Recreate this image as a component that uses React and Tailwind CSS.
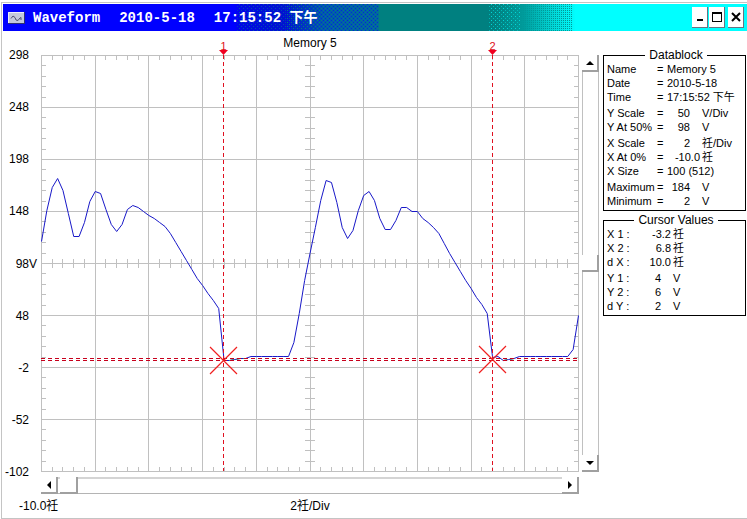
import React from 'react'
import clsx from 'clsx'

const PLOT_W = 538
const PLOT_H = 417
const COLS = 10
const ROWS = 8

const yLabels = ['298', '248', '198', '148', '98', '48', '-2', '-52', '-102']

// vertical trace position for each of the 101 samples
const samples = [
  186, 155, 132, 123, 135, 158, 181, 181, 167, 146, 136, 138, 154, 169, 176,
  169, 154, 150, 152, 156, 160, 163, 167, 171, 178, 187, 196, 205, 214, 223,
  230, 238, 245, 253, 305, 305, 304, 303, 303, 301, 301, 301, 301, 301, 301,
  301, 301, 287, 258, 225, 198, 172, 145, 125, 127, 147, 172, 183, 175, 155,
  140, 136, 145, 163, 174, 174, 165, 152, 152, 156, 156, 163, 167, 172, 178,
  188, 198, 207, 216, 225, 233, 242, 249, 258, 302, 301, 305, 304, 303, 301,
  301, 301, 301, 301, 301, 301, 301, 301, 301, 294, 260,
]

const datablock = [
  [
    { label: 'Name', text: 'Memory 5' },
    { label: 'Date', text: '2010-5-18' },
    { label: 'Time', text: '17:15:52 下午' },
  ],
  [
    { label: 'Y Scale', value: '50', unit: 'V/Div' },
    { label: 'Y At 50%', value: '98', unit: 'V' },
  ],
  [
    { label: 'X Scale', value: '2', unit: '祍/Div' },
    { label: 'X At 0%', value: '-10.0', unit: '祍' },
    { label: 'X Size', text: '100 (512)' },
  ],
  [
    { label: 'Maximum', value: '184', unit: 'V' },
    { label: 'Minimum', value: '2', unit: 'V' },
  ],
]

const cursorValues = [
  [
    { label: 'X 1 :', value: '-3.2', unit: '祍' },
    { label: 'X 2 :', value: '6.8', unit: '祍' },
    { label: 'd X :', value: '10.0', unit: '祍' },
  ],
  [
    { label: 'Y 1 :', value: '4', unit: 'V' },
    { label: 'Y 2 :', value: '6', unit: 'V' },
    { label: 'd Y :', value: '2', unit: 'V' },
  ],
]

const cursors = [
  { id: '1', x: 182, y: 305 },
  { id: '2', x: 451, y: 304 },
]

const range = n => Array.from({ length: n }, (_, i) => i)
const px = n => Math.round(n) + 0.5
const sampleX = i => (i * (PLOT_W - 1)) / 100 + 0.5
const trace = (from, to) =>
  samples
    .slice(from, to + 1)
    .map((y, i) => `${sampleX(from + i)},${y + 0.5}`)
    .join(' ')

const DitherBand = () => (
  <svg className="absolute inset-0 h-full w-full" aria-hidden="true">
    <defs>
      <pattern id="blueSparse" width="4" height="4" patternUnits="userSpaceOnUse">
        <rect width="1" height="1" fill="#0050b0" />
        <rect x="2" y="2" width="1" height="1" fill="#0050b0" />
      </pattern>
      <pattern id="blueDense" width="4" height="4" patternUnits="userSpaceOnUse">
        <rect width="1" height="1" fill="#0030d0" />
        <rect x="2" y="2" width="1" height="1" fill="#0030d0" />
        <rect x="2" width="1" height="1" fill="#008080" />
        <rect y="2" width="1" height="1" fill="#008080" />
      </pattern>
      <pattern id="cyanSparse" width="4" height="4" patternUnits="userSpaceOnUse">
        <rect width="1" height="1" fill="#00d8d8" />
        <rect x="2" y="2" width="1" height="1" fill="#00b8b8" />
      </pattern>
      <pattern id="cyanDense" width="2" height="2" patternUnits="userSpaceOnUse">
        <rect width="1" height="1" fill="#009898" />
      </pattern>
    </defs>
    <rect x="31.5%" width="11%" height="100%" fill="url(#blueSparse)" />
    <rect x="38%" width="12.5%" height="100%" fill="url(#blueDense)" />
    <rect x="65.2%" width="6%" height="100%" fill="url(#cyanSparse)" />
    <rect x="69.5%" width="7%" height="100%" fill="url(#cyanDense)" />
  </svg>
)

const CaptionButton = ({ label, children }) => (
  <button
    aria-label={label}
    className="flex h-[21px] w-4 items-center justify-center border-r border-b border-gray-500 bg-white"
  >
    {children}
  </button>
)

const TitleBar = () => (
  <header className="relative flex h-[27px] items-center bg-[linear-gradient(90deg,#0000ff_31%,#0008e4_32%,#0014d0_38%,#0058b0_43%,#0064a4_50.4%,#008080_50.6%,#008080_66%,#009c9c_70%,#00d8d8_74%,#00ffff_77%)]">
    <DitherBand />
    <svg className="relative ml-[5px] h-3 w-[17px]" viewBox="0 0 17 12" aria-hidden="true">
      <rect width="17" height="12" fill="#303070" />
      <rect width="16" height="11" fill="#c4c8dc" />
      <path d="M0.5 11V0.5H16" fill="none" stroke="#eeeef8" />
      <path d="M3 6.5L5 4L7 5.5L8 8L10 8.5L12 6L13 5.5V8" fill="none" stroke="#505070" />
    </svg>
    <h1 className="relative ml-2 flex flex-1 gap-[19px] font-['Liberation_Mono','Noto_Sans_CJK_SC',monospace] text-[14px] leading-4 font-bold whitespace-nowrap text-white">
      <span>Waveform</span>
      <span>2010-5-18</span>
      <span>17:15:52 下午</span>
    </h1>
    <div className="relative mr-[3px] flex">
      <CaptionButton label="Minimize">
        <svg className="h-3 w-3" viewBox="0 0 12 12">
          <rect x="3" y="8" width="6" height="2" fill="#000" />
        </svg>
      </CaptionButton>
      <div className="ml-px mr-[3px]">
        <CaptionButton label="Maximize">
          <svg className="h-3 w-3" viewBox="0 0 12 12">
            <path d="M1 1H11V11H1ZM2 3V10H10V3Z" fill="#000" fillRule="evenodd" />
          </svg>
        </CaptionButton>
      </div>
      <CaptionButton label="Close">
        <svg className="h-3 w-3" viewBox="0 0 12 12">
          <path d="M2 2L10 10M10 2L2 10" stroke="#000" strokeWidth="2" />
        </svg>
      </CaptionButton>
    </div>
  </header>
)

const Grid = () => (
  <g stroke="#c0c0c0" shapeRendering="crispEdges">
    {range(COLS + 1).map(i => {
      const x = px((i * (PLOT_W - 1)) / COLS)
      return <line key={i} x1={x} x2={x} y1="0" y2={PLOT_H} />
    })}
    {range(ROWS + 1).map(i => {
      const y = px((i * (PLOT_H - 1)) / ROWS)
      return <line key={i} x1="0" x2={PLOT_W} y1={y} y2={y} />
    })}
    {range(COLS * 5).map(i => {
      const x = px((i * (PLOT_W - 1)) / (COLS * 5))
      return <path key={i} d={`M${x} 0V5M${x} 204V213M${x} 412V417`} />
    })}
    {range(ROWS * 5).map(i => {
      const y = px((i * (PLOT_H - 1)) / (ROWS * 5))
      return <path key={i} d={`M0 ${y}H5M264 ${y}H274M533 ${y}H538`} />
    })}
  </g>
)

const Plot = () => (
  <svg
    className="block h-auto w-full overflow-visible"
    viewBox={`0 0 ${PLOT_W} ${PLOT_H}`}
    role="img"
    aria-label="Waveform"
  >
    <Grid />
    <polyline points={trace(0, 100)} fill="none" stroke="#1818c8" />
    <polyline points={trace(35, 38)} fill="none" stroke="#30a050" strokeDasharray="4 3" />
    <polyline points={trace(86, 88)} fill="none" stroke="#30a050" strokeDasharray="4 3" />
    <g stroke="#c8001c" strokeDasharray="4 3" shapeRendering="crispEdges">
      <line x1="0" x2="537" y1="303.5" y2="303.5" />
      <line x1="0" x2="537" y1="305.5" y2="305.5" />
    </g>
    {cursors.map(({ id, x, y }) => (
      <g key={id}>
        <line
          x1={x + 0.5}
          x2={x + 0.5}
          y1="0"
          y2="416"
          stroke="#e01020"
          strokeDasharray="4 3"
          shapeRendering="crispEdges"
        />
        <path
          d={`M${x - 13} ${y - 13}L${x + 14} ${y + 14}M${x + 14} ${y - 13}L${x - 13} ${y + 14}`}
          stroke="#f02020"
          strokeWidth="1.2"
        />
        <path d={`M${x - 4} -5H${x + 5}L${x + 0.5} 0Z`} fill="#f00020" />
        <text x={x + 0.5} y="-5" textAnchor="middle" fontSize="11" fill="#e01020">
          {id}
        </text>
      </g>
    ))}
  </svg>
)

const arrows = {
  up: 'M0 6L4 2L8 6Z',
  down: 'M0 2L4 6L8 2Z',
  left: 'M6 0L2 4L6 8Z',
  right: 'M2 0L6 4L2 8Z',
}

const ArrowButton = ({ dir }) => (
  <button
    aria-label={`Scroll ${dir}`}
    className="flex h-[17px] w-[17px] shrink-0 items-center justify-center border-r-2 border-b-2 border-[#a0a0a0] bg-white"
  >
    <svg className="h-2 w-2" viewBox="0 0 8 8">
      <path d={arrows[dir]} fill="#000" />
    </svg>
  </button>
)

const VerticalScroll = () => (
  <div className="flex w-[17px] flex-col">
    <ArrowButton dir="up" />
    <div className="flex flex-1 flex-col justify-center border-x border-[#c0c0c0]">
      <div className="-mx-px h-[17px] border-r-2 border-b-2 border-[#a0a0a0] bg-white" />
    </div>
    <ArrowButton dir="down" />
  </div>
)

const HorizontalScroll = () => (
  <div className="flex h-[17px]">
    <ArrowButton dir="left" />
    <div className="flex-1 border-t-2 border-b border-t-[#d4d4d4] border-b-[#b4b4b4]">
      <div className="-mt-0.5 ml-0.5 h-[17px] w-[18px] border-r-2 border-b-2 border-[#a0a0a0] bg-white" />
    </div>
    <ArrowButton dir="right" />
  </div>
)

const Panel = ({ title, groups, equals }) => (
  <fieldset className="min-w-0 border border-black pb-0.5 pl-[3px] text-[11px] leading-[14px]">
    <legend className="mx-auto px-1 text-[12px] leading-[14px]">{title}</legend>
    <table className="w-full table-fixed border-collapse whitespace-nowrap">
      <colgroup>
        <col className={equals ? 'w-[50px]' : 'w-[34px]'} />
        {equals && <col className="w-[10px]" />}
        <col className={equals ? 'w-[33px]' : 'w-[30px]'} />
        <col />
      </colgroup>
      {groups.map((rows, g) => (
        <tbody key={g} className={clsx(g > 0 && 'before:block before:h-0.5')}>
          {rows.map(row => (
            <tr key={row.label} className="h-[14px]">
              <th scope="row" className="p-0 text-left font-normal">
                {row.label}
              </th>
              {equals && <td className="p-0">=</td>}
              {row.text ? (
                <td colSpan="2" className="p-0">
                  {row.text}
                </td>
              ) : (
                <>
                  <td className={clsx('p-0 text-right', !row.value.includes('.') && 'pr-2.5')}>
                    {row.value}
                  </td>
                  <td className="p-0 pl-0.5">{row.unit}</td>
                </>
              )}
            </tr>
          ))}
        </tbody>
      ))}
    </table>
  </fieldset>
)

const App = () => {
  return (
    <div className="bg-white pt-0.5 pl-px font-['Liberation_Sans','Noto_Sans_CJK_SC',sans-serif] text-xs text-black">
      <main className="border-t border-b border-l border-[#c4c4c4] pt-px pb-1 pl-px">
        <TitleBar />
        <div className="flex gap-1 pr-px">
          <div className="min-w-0 flex-1">
            <h2 className="mr-5 ml-[38px] py-1 text-center leading-4">Memory 5</h2>
            <div className="flex">
              <div className="-my-2 flex w-[38px] shrink-0 flex-col justify-between leading-4">
                {yLabels.map(label => (
                  <div key={label} className="flex justify-end">
                    <span>{label}</span>
                    <span className="w-3">{label === '98' && 'V'}</span>
                  </div>
                ))}
              </div>
              <div className="mr-[3px] min-w-0 flex-1">
                <Plot />
              </div>
              <VerticalScroll />
            </div>
            <div className="mt-[5px] mr-5 ml-[38px]">
              <HorizontalScroll />
            </div>
            <div className="mt-1 mr-5 flex leading-4 whitespace-nowrap">
              <span className="w-[38px] pl-4">-10.0祍</span>
              <span className="flex-1 text-center">2祍/Div</span>
            </div>
          </div>
          <aside className="flex w-[143px] shrink-0 flex-col gap-0.5 pt-[17px]">
            <Panel title="Datablock" groups={datablock} equals />
            <Panel title="Cursor Values" groups={cursorValues} />
          </aside>
        </div>
      </main>
    </div>
  )
}

export default App
